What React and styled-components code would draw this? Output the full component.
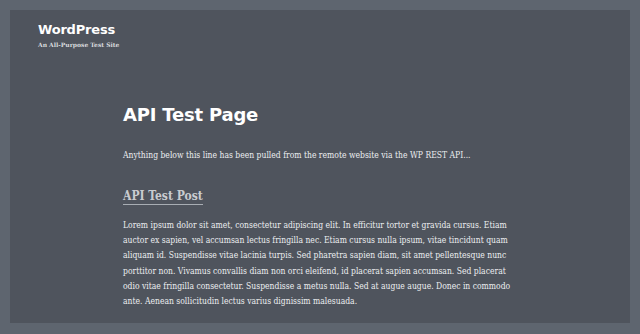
import styled, { createGlobalStyle } from "styled-components";

const Global = createGlobalStyle`
  html, body {
    margin: 0;
    padding: 0;
    background: #5e656f;
  }
  body {
    font-family: "DejaVu Serif", "Liberation Serif", serif;
  }
`;

const Page = styled.div`
  padding: 10px;
  height: 334px;
  box-sizing: border-box;
`;

const Panel = styled.div`
  background: #4f545d;
  height: 313px;
  box-sizing: border-box;
  padding: 12px 28px 0;
`;

const SiteHeader = styled.header`
  display: flex;
  flex-direction: column;
  gap: 3px;
`;

const SiteTitle = styled.h1`
  margin: 0;
  font-family: "DejaVu Sans", sans-serif;
  font-weight: bold;
  font-size: 13px;
  line-height: 16px;
  color: #ffffff;
  letter-spacing: -0.2px;
`;

const Tagline = styled.p`
  margin: 0;
  font-size: 6px;
  font-weight: bold;
  color: #d9dbde;
`;

const Content = styled.main`
  width: 392px;
  margin: 55px 0 0 85px;
`;

const PageTitle = styled.h2`
  margin: 0;
  font-family: "DejaVu Sans", sans-serif;
  font-weight: bold;
  font-size: 18px;
  line-height: 24px;
  color: #ffffff;
  letter-spacing: -0.2px;
`;

const Intro = styled.p`
  margin: 22px 0 0;
  font-size: 8.5px;
  font-stretch: condensed;
  line-height: 12px;
  color: #eceef0;
`;

const PostTitle = styled.h3`
  display: inline-block;
  margin: 28px 0 0;
  font-size: 12px;
  font-stretch: condensed;
  line-height: 14px;
  font-weight: bold;
  color: #c9ccd0;
  padding-bottom: 1px;
  border-bottom: 1px solid #a8adb3;
`;

const Body = styled.p`
  margin: 13px 0 0;
  font-size: 8.5px;
  font-stretch: condensed;
  line-height: 15.2px;
  color: #eceef0;
`;

export default function App() {
  return (
    <>
      <Global />
      <Page>
        <Panel>
          <SiteHeader>
            <SiteTitle>WordPress</SiteTitle>
            <Tagline>An All-Purpose Test Site</Tagline>
          </SiteHeader>
          <Content>
            <PageTitle>API Test Page</PageTitle>
            <Intro>
              Anything below this line has been pulled from the remote website
              via the WP REST API...
            </Intro>
            <PostTitle>API Test Post</PostTitle>
            <Body>
              Lorem ipsum dolor sit amet, consectetur adipiscing elit. In
              efficitur tortor et gravida cursus. Etiam auctor ex sapien, vel
              accumsan lectus fringilla nec. Etiam cursus nulla ipsum, vitae
              tincidunt quam aliquam id. Suspendisse vitae lacinia turpis. Sed
              pharetra sapien diam, sit amet pellentesque nunc porttitor non.
              Vivamus convallis diam non orci eleifend, id placerat sapien
              accumsan. Sed placerat odio vitae fringilla consectetur.
              Suspendisse a metus nulla. Sed at augue augue. Donec in commodo
              ante. Aenean sollicitudin lectus varius dignissim malesuada.
            </Body>
          </Content>
        </Panel>
      </Page>
    </>
  );
}
